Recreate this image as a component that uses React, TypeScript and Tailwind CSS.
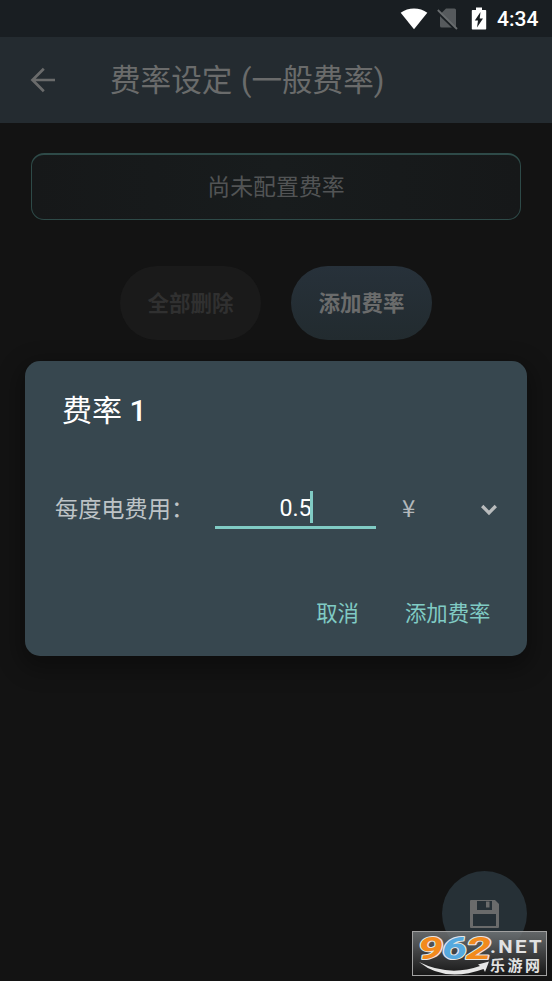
function StatusBar() {
  return (
    <div className="flex h-[37px] shrink-0 items-center justify-end bg-[#191e22] pt-px pr-[12px] text-white">
      <svg className="mr-[9px] h-[22px] w-[28px]" viewBox="0 0 28 22" fill="currentColor">
        <path d="M.7 4.700C8-1 20-1 27.300 4.700L14 21.200Z" />
      </svg>
      <svg className="mr-[13px] h-[22px] w-[21px]" viewBox="0 0 21 22">
        <path d="M9 .5h8.500q1.500 0 1.500 1.500V18q0 1.500-1.500 1.500H4.500Q3 19.500 3 18V6.500Z" fill="#565a5d" />
        <path d="M.5 4 19 22" stroke="#191e22" strokeWidth="2.500" />
        <path d="M.8 2 20 21" stroke="#686c6e" strokeWidth="1.800" />
      </svg>
      <svg className="mr-[10px] h-[24px] w-[16px]" viewBox="0 0 16 24">
        <path d="M5 .5h6v2.500h3.500q.7 0 .7.7V21.800q0 .7-.7.7H1.500q-.7 0-.7-.7V3.700q0-.7.7-.7H5Z" fill="currentColor" />
        <path d="M9.500 5 3.800 13.500h3.200L6 20.500 12 11.500H8.700Z" fill="#191e22" />
      </svg>
      <span className="w-[43px] text-[21px] leading-[37px] font-medium whitespace-nowrap">4:34</span>
    </div>
  );
}

function AppBar() {
  return (
    <header className="flex h-[86px] shrink-0 items-center bg-[#242b30] pl-[30px] text-[#6a6b6b]">
      <svg className="h-[26px] w-[26px]" viewBox="0 0 26 26" fill="none" stroke="currentColor" strokeWidth="2.700">
        <path d="M25 13H2.500M13.800 1.700 2.500 13 13.800 24.300" />
      </svg>
      <h1 className="mt-[2px] ml-[54px] text-[30.6px] leading-[44px] whitespace-nowrap">
        费率设定<span className="ml-px"> (一般费率)</span>
      </h1>
    </header>
  );
}

function RateDialog() {
  return (
    <section className="absolute top-[361px] left-[25px] flex h-[295px] w-[502px] flex-col rounded-[15px] bg-[#37474f] shadow-[0_8px_22px_6px_rgba(0,0,0,0.3)]">
      <h2 className="mt-[29px] ml-[37px] text-[30px] leading-[42px] text-white">
        费率 <span className="font-medium">1</span>
      </h2>
      <div className="mt-[58px] flex h-[40px] items-start pl-[30px] text-[23.200px] leading-[36px]">
        <span className="w-[160px] pt-px whitespace-nowrap text-[#bdc3c6]">每度电费用：</span>
        <div className="relative flex h-[39px] w-[161px] justify-center border-b-[3px] border-[#80cbc4] text-white">
          <span>0.5</span>
          <i className="absolute top-[1px] left-[95px] h-[32px] w-[3px] bg-[#80cbc4]" />
        </div>
        <span className="-mt-px ml-[26px] w-[78px] font-['Noto_Sans_CJK_SC',sans-serif] text-[24px] text-[#b3b8bb]">¥</span>
        <svg className="mt-[14px] h-[12px] w-[18px]" viewBox="0 0 18 12" fill="none" stroke="#b9bcbd" strokeWidth="3.300">
          <path d="m2.200 2 6.800 6.800L15.800 2" />
        </svg>
      </div>
      <div className="mt-[64px] flex justify-end gap-[46px] pr-[36.500px] text-[21.400px] leading-[40px] text-[#80cbc4]">
        <button>取消</button>
        <button>添加费率</button>
      </div>
    </section>
  );
}

function Watermark() {
  return (
    <svg className="absolute top-[931px] left-[412px] h-[45px] w-[135px] overflow-visible" viewBox="0 0 135 45">
      <defs>
        <linearGradient id="plate" x1="0" y1="0" x2="0" y2="1">
          <stop offset="0" stopColor="#777b7d" stopOpacity=".8" />
          <stop offset=".5" stopColor="#424344" stopOpacity=".92" />
          <stop offset="1" stopColor="#161616" />
        </linearGradient>
      </defs>
      <rect x=".5" y=".5" width="134" height="44" fill="url(#plate)" stroke="#a1a1a1" />
      <g fontFamily="Roboto, sans-serif" fontWeight="700" fontStyle="italic" fontSize="32" stroke="#e6e6e6" strokeWidth="2" paintOrder="stroke" strokeLinejoin="round">
        <text x="6" y="27.500" fill="#f28a1d" textLength="25" lengthAdjust="spacingAndGlyphs">9</text>
        <text x="30" y="27.500" fill="#55a9df" textLength="25" lengthAdjust="spacingAndGlyphs">6</text>
        <text x="54" y="27.500" fill="#f28a1d" textLength="25" lengthAdjust="spacingAndGlyphs">2</text>
      </g>
      <path d="M7 31Q37 46 68 35L66 33.500 77 30.500 73 41 71.500 38Q33 52 7 31Z" fill="#e6e6e6" />
      <text x="78" y="21.500" fontFamily="Roboto, sans-serif" fontWeight="700" fontSize="17.500" letterSpacing="2" fill="#e2e2e2" textLength="54" lengthAdjust="spacingAndGlyphs">.NET</text>
      <text x="78" y="40" fontFamily="Noto Sans CJK SC, sans-serif" fontWeight="700" fontSize="15" fill="#e2e2e2" textLength="50" lengthAdjust="spacing">乐游网</text>
    </svg>
  );
}

export default function App() {
  return (
    <div className="relative flex h-[981px] w-[552px] flex-col overflow-hidden bg-[#131313] font-[Roboto,'Noto_Sans_CJK_SC',sans-serif]">
      <StatusBar />
      <AppBar />
      <main className="px-[31px] pt-[30px]">
        <div className="flex h-[67px] items-center justify-center rounded-[13px] border border-t-2 border-[#2e4a48] bg-linear-to-r from-[#161819] via-[#181c1d] to-[#161819] pt-[2px] text-[22.900px] text-[#525455]">
          尚未配置费率
        </div>
        <div className="mt-[46px] flex justify-center gap-[30px] text-[21.500px] font-bold">
          <button className="h-[74px] w-[141px] rounded-full bg-[#1a1a1a] pt-[2px] text-[#303030]">全部删除</button>
          <button className="h-[74px] w-[141px] rounded-full bg-linear-to-b from-[#27313a] to-[#222b2f] pt-[2px] text-[#6b6c6c]">添加费率</button>
        </div>
      </main>
      <button className="absolute top-[871px] left-[442px] flex h-[85px] w-[85px] items-center justify-center rounded-full bg-[#263036]">
        <svg className="h-[28px] w-[29px]" viewBox="0 0 29 28">
          <path d="M1 0H25L29 4V27q0 1-1 1H1q-1 0-1-1V1q0-1 1-1Z" fill="#6a6b6b" />
          <path d="M7 1h15v9H7ZM3 14h23v12H3Z" fill="#263036" />
          <path d="M16 1.500h3.500v6H16Z" fill="#6a6b6b" />
        </svg>
      </button>
      <RateDialog />
      <Watermark />
    </div>
  );
}
